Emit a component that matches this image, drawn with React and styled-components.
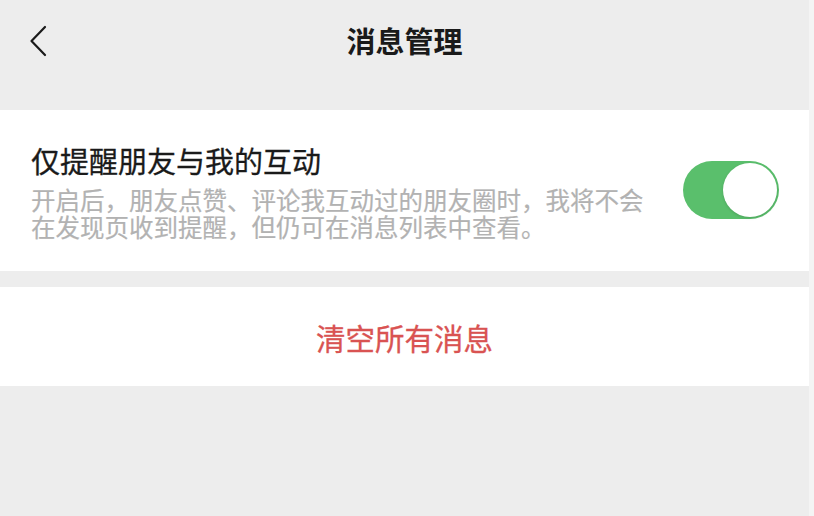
import React from "react";
import styled, { createGlobalStyle } from "styled-components";

const GlobalStyle = createGlobalStyle`
  html, body {
    margin: 0;
    padding: 0;
    background: #ededed;
  }
  body {
    font-family: "Noto Sans CJK SC", "Noto Sans", sans-serif;
  }
`;

const Page = styled.div`
  display: flex;
  min-height: 516px;
`;

const Main = styled.div`
  width: 809px;
  background: #ededed;
`;

const Edge = styled.div`
  flex: 1;
  background: #f4f4f4;
`;

const Header = styled.header`
  position: relative;
  height: 80px;
  display: flex;
  align-items: center;
  justify-content: center;
  margin-bottom: 30px;
`;

const Back = styled.button`
  position: absolute;
  left: 29px;
  top: 25px;
  width: 20px;
  height: 32px;
  padding: 0;
  border: none;
  background: none;
  display: flex;
  align-items: center;
`;

const Title = styled.h1`
  margin: 0;
  font-size: 29px;
  font-weight: 700;
  color: #1a1a1a;
  line-height: 1;
`;

const Section = styled.section`
  background: #fff;
  margin-top: ${(p) => p.$gap || 0}px;
`;

const SettingRow = styled.div`
  display: flex;
  align-items: center;
  padding: 30px 30px 31px 31px;
`;

const Texts = styled.div`
  flex: 1;
`;

const Label = styled.div`
  font-size: 29px;
  line-height: 40px;
  color: #1a1a1a;
  -webkit-text-stroke: 0.3px #1a1a1a;
`;

const Hint = styled.div`
  width: 615px;
  margin-top: 6px;
  font-size: 24.5px;
  line-height: 27px;
  color: #b2b2b2;
  -webkit-text-stroke: 0.2px #b2b2b2;
`;

const Switch = styled.div`
  position: relative;
  width: 96px;
  height: 58px;
  border-radius: 29px;
  background: ${(p) => (p.$on ? "#5abf6c" : "#e5e5e5")};
`;

const Knob = styled.span`
  position: absolute;
  top: 2px;
  left: ${(p) => (p.$on ? "40px" : "2px")};
  width: 54px;
  height: 54px;
  border-radius: 50%;
  background: #fff;
  box-shadow: 0 1px 3px rgba(0, 0, 0, 0.15);
`;

const Danger = styled.button`
  display: block;
  width: 100%;
  height: 99px;
  border: none;
  background: none;
  font-family: inherit;
  font-size: 29.5px;
  color: #d95352;
  -webkit-text-stroke: 0.3px #d95352;
  padding: 0;
`;

export default function App() {
  return (
    <>
      <GlobalStyle />
      <Page>
        <Main>
          <Header>
            <Back aria-label="返回">
              <svg width="18" height="32" viewBox="0 0 18 32">
                <polyline
                  points="16,2 2.5,16 16,30"
                  fill="none"
                  stroke="#1a1a1a"
                  strokeWidth="2.2"
                  strokeLinecap="round"
                  strokeLinejoin="round"
                />
              </svg>
            </Back>
            <Title>消息管理</Title>
          </Header>

          <Section>
            <SettingRow>
              <Texts>
                <Label>仅提醒朋友与我的互动</Label>
                <Hint>
                  开启后，朋友点赞、评论我互动过的朋友圈时，我将不会在发现页收到提醒，但仍可在消息列表中查看。
                </Hint>
              </Texts>
              <Switch $on>
                <Knob $on />
              </Switch>
            </SettingRow>
          </Section>

          <Section $gap={16}>
            <Danger>清空所有消息</Danger>
          </Section>
        </Main>
        <Edge />
      </Page>
    </>
  );
}
